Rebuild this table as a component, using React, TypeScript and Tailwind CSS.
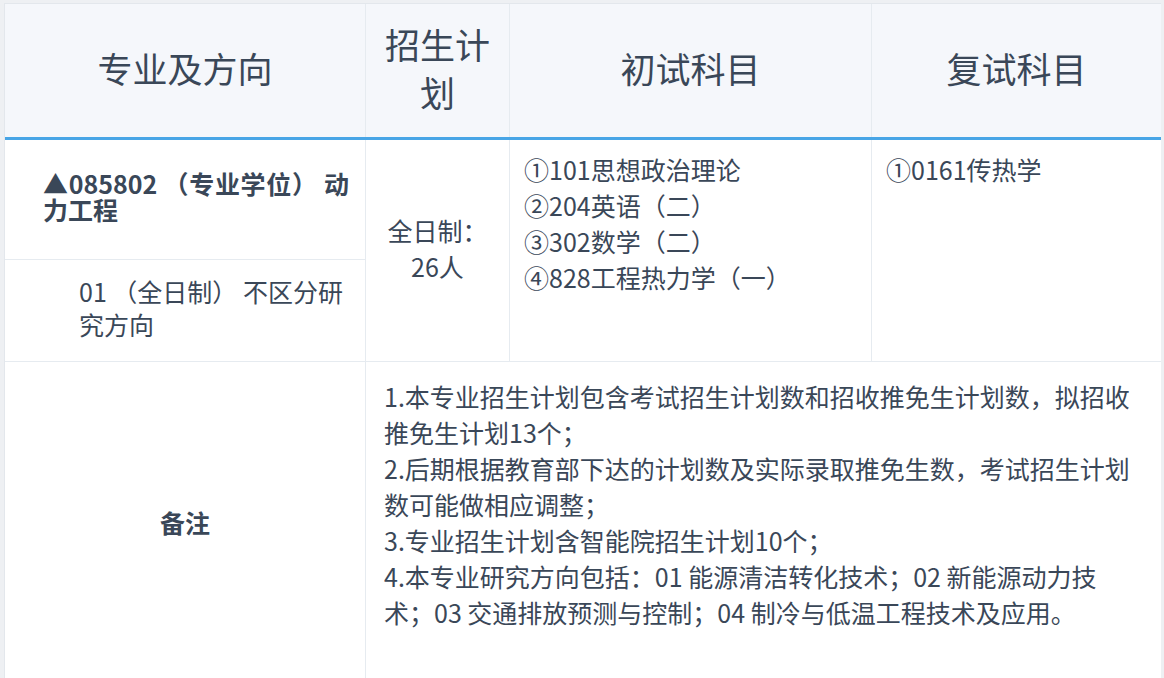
import React from "react";

const font = {
  fontFamily: '"Noto Sans CJK SC", "Noto Sans", sans-serif',
};

export default function App() {
  return (
    <div
      className="w-[1164px] h-[678px] overflow-hidden bg-[#eef0f3] pl-[4px] pt-[3px] text-[#3a4758]"
      style={font}
    >
      <div className="w-[1157px] bg-white border-l border-t border-[#e3e7ec]">
        {/* Header */}
        <div className="flex h-[136px] bg-[#f5f7fb] border-b-[3px] border-[#48a5e6] text-[35px] leading-[48px]">
          <div className="w-[361px] flex items-center justify-center pb-[6px] border-r border-[#e6ebf0]">
            专业及方向
          </div>
          <div className="w-[144px] flex items-center justify-center text-center px-[12px] pb-[6px] border-r border-[#e6ebf0]">
            招生计划
          </div>
          <div className="w-[362px] flex items-center justify-center pb-[6px] border-r border-[#e6ebf0]">
            初试科目
          </div>
          <div className="flex-1 flex items-center justify-center pb-[6px]">复试科目</div>
        </div>

        {/* Row 1 */}
        <div className="flex h-[222px] border-b border-[#e6ebf0] text-[25px]">
          <div className="w-[361px] flex flex-col border-r border-[#e6ebf0]">
            <div className="h-[120px] flex items-center border-b border-[#e6ebf0] pl-[38px] pr-[16px] pb-[7px]">
              <div className="font-bold leading-[26px] text-justify w-full">
                ▲085802 （专业学位） 动力工程
              </div>
            </div>
            <div className="flex-1 flex items-center pl-[74px] pr-[16px] pb-[6px]">
              <div className="leading-[33px]">01 （全日制） 不区分研究方向</div>
            </div>
          </div>
          <div className="w-[144px] flex items-center justify-center text-center leading-[36px] pb-[6px] border-r border-[#e6ebf0]">
            <div>
              全日制：
              <br />
              26人
            </div>
          </div>
          <div className="w-[362px] pl-[14px] pt-[11px] leading-[36px] border-r border-[#e6ebf0]">
            <div>①101思想政治理论</div>
            <div>②204英语（二）</div>
            <div>③302数学（二）</div>
            <div>④828工程热力学（一）</div>
          </div>
          <div className="flex-1 pl-[14px] pt-[11px] leading-[36px]">
            <div>①0161传热学</div>
          </div>
        </div>

        {/* Row 2 */}
        <div className="flex h-[328px] text-[25px]">
          <div className="w-[361px] flex items-center justify-center font-bold pb-[6px] border-r border-[#e6ebf0]">
            备注
          </div>
          <div className="flex-1 pl-[18px] pr-[18px] pt-[16px] leading-[36px]">
            <div>1.本专业招生计划包含考试招生计划数和招收推免生计划数，拟招收推免生计划13个；</div>
            <div>2.后期根据教育部下达的计划数及实际录取推免生数，考试招生计划数可能做相应调整；</div>
            <div>3.专业招生计划含智能院招生计划10个；</div>
            <div>4.本专业研究方向包括：01 能源清洁转化技术；02 新能源动力技术；03 交通排放预测与控制；04 制冷与低温工程技术及应用。</div>
          </div>
        </div>
      </div>
    </div>
  );
}
